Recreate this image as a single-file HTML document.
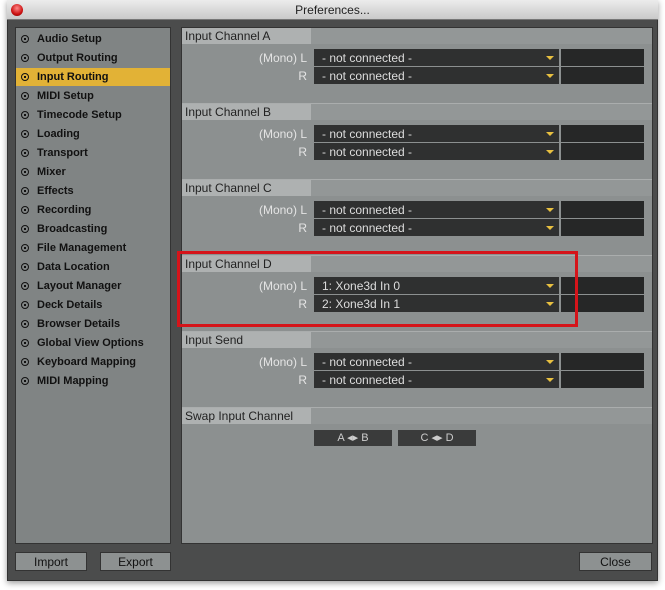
<!DOCTYPE html><html><head><style>
*{margin:0;padding:0;box-sizing:border-box}
body{width:665px;height:590px;background:#fff;position:relative;overflow:hidden;font-family:"Liberation Sans",Arial,sans-serif;font-size:11px}
.a{position:absolute}
.win{left:7px;top:0;width:651px;height:581px;background:#4b4c4c;box-shadow:0 2px 6px rgba(0,0,0,.4);border:1px solid #333}
.tb{left:7px;top:0;width:651px;height:20px;background:linear-gradient(#ececec,#c9c9c9);border-bottom:1px solid #777;text-align:center;line-height:20px;font-size:12px;color:#222}
.dot{left:11px;top:4px;width:12px;height:12px;border-radius:50%;background:radial-gradient(circle at 50% 35%,#f88,#c11 60%,#700)}
.lp{left:15px;top:27px;width:156px;height:517px;background:#808484;border:1px solid #333}
.rp{left:181px;top:27px;width:472px;height:517px;background:#8c9090;border:1px solid #333}
.it{left:16px;width:154px;height:18px;line-height:19px;color:#111;font-weight:bold;font-size:11px;padding-left:21px}
.it::before{content:"";position:absolute;left:5px;top:5px;width:8px;height:8px;border-radius:50%;border:1.5px solid #111;box-sizing:border-box}
.it::after{content:"";position:absolute;left:8px;top:8px;width:2px;height:2px;background:#111}
.sel{background:#e2b236}
.hd{left:182px;width:129px;height:16px;background:#aeb1b1;color:#222;line-height:16px;padding-left:3px;font-size:12px}
.hr{left:311px;width:341px;height:16px;background:#939797}
.sep{left:182px;width:470px;height:1px;background:#aaadad}
.lb{width:125px;left:182px;text-align:right;color:#e4e4e4;font-size:12px;height:17px;line-height:18px}
.cb{left:314px;width:245px;height:17px;background:#2f3030;color:#ddd;line-height:18px;padding-left:8px;font-size:12px}
.cb::after{content:"";position:absolute;right:5px;top:7px;border-left:4px solid transparent;border-right:4px solid transparent;border-top:4px solid #e8c040}
.bx{left:561px;width:83px;height:17px;background:#262727}
.sw{top:430px;width:78px;height:16px;background:#3a3b3b;color:#ccc;text-align:center;line-height:16px;font-size:11px}
.bt{top:552px;height:19px;background:#8d9191;border:1px solid #333;text-align:center;line-height:18px;color:#111;font-size:12px}
</style></head><body>
<div class="a win"></div>
<div class="a tb">Preferences...</div>
<div class="a dot"></div>
<div class="a lp"></div>
<div class="a rp"></div>
<div class="a it" style="top:30px">Audio Setup</div>
<div class="a it" style="top:49px">Output Routing</div>
<div class="a it sel" style="top:68px">Input Routing</div>
<div class="a it" style="top:87px">MIDI Setup</div>
<div class="a it" style="top:106px">Timecode Setup</div>
<div class="a it" style="top:125px">Loading</div>
<div class="a it" style="top:144px">Transport</div>
<div class="a it" style="top:163px">Mixer</div>
<div class="a it" style="top:182px">Effects</div>
<div class="a it" style="top:201px">Recording</div>
<div class="a it" style="top:220px">Broadcasting</div>
<div class="a it" style="top:239px">File Management</div>
<div class="a it" style="top:258px">Data Location</div>
<div class="a it" style="top:277px">Layout Manager</div>
<div class="a it" style="top:296px">Deck Details</div>
<div class="a it" style="top:315px">Browser Details</div>
<div class="a it" style="top:334px">Global View Options</div>
<div class="a it" style="top:353px">Keyboard Mapping</div>
<div class="a it" style="top:372px">MIDI Mapping</div>

<div class="a hd" style="top:28px">Input Channel A</div><div class="a hr" style="top:28px"></div>
<div class="a lb" style="top:49px">(Mono) L</div><div class="a cb" style="top:49px">- not connected -</div><div class="a bx" style="top:49px"></div>
<div class="a lb" style="top:67px">R</div><div class="a cb" style="top:67px">- not connected -</div><div class="a bx" style="top:67px"></div>

<div class="a sep" style="top:103px"></div>
<div class="a hd" style="top:104px">Input Channel B</div><div class="a hr" style="top:104px"></div>
<div class="a lb" style="top:125px">(Mono) L</div><div class="a cb" style="top:125px">- not connected -</div><div class="a bx" style="top:125px"></div>
<div class="a lb" style="top:143px">R</div><div class="a cb" style="top:143px">- not connected -</div><div class="a bx" style="top:143px"></div>

<div class="a sep" style="top:179px"></div>
<div class="a hd" style="top:180px">Input Channel C</div><div class="a hr" style="top:180px"></div>
<div class="a lb" style="top:201px">(Mono) L</div><div class="a cb" style="top:201px">- not connected -</div><div class="a bx" style="top:201px"></div>
<div class="a lb" style="top:219px">R</div><div class="a cb" style="top:219px">- not connected -</div><div class="a bx" style="top:219px"></div>

<div class="a sep" style="top:255px"></div>
<div class="a hd" style="top:256px">Input Channel D</div><div class="a hr" style="top:256px"></div>
<div class="a lb" style="top:277px">(Mono) L</div><div class="a cb" style="top:277px">1: Xone3d In 0</div><div class="a bx" style="top:277px"></div>
<div class="a lb" style="top:295px">R</div><div class="a cb" style="top:295px">2: Xone3d In 1</div><div class="a bx" style="top:295px"></div>

<div class="a sep" style="top:331px"></div>
<div class="a hd" style="top:332px">Input Send</div><div class="a hr" style="top:332px"></div>
<div class="a lb" style="top:353px">(Mono) L</div><div class="a cb" style="top:353px">- not connected -</div><div class="a bx" style="top:353px"></div>
<div class="a lb" style="top:371px">R</div><div class="a cb" style="top:371px">- not connected -</div><div class="a bx" style="top:371px"></div>

<div class="a sep" style="top:407px"></div>
<div class="a hd" style="top:408px">Swap Input Channel</div><div class="a hr" style="top:408px"></div>
<div class="a sw" style="left:314px">A ◂▸ B</div>
<div class="a sw" style="left:398px">C ◂▸ D</div>

<div class="a" style="left:177px;top:251px;width:401px;height:76px;border:3px solid #d5141a"></div>

<div class="a bt" style="left:15px;width:72px">Import</div>
<div class="a bt" style="left:100px;width:71px">Export</div>
<div class="a bt" style="left:579px;width:73px">Close</div>
</body></html>
